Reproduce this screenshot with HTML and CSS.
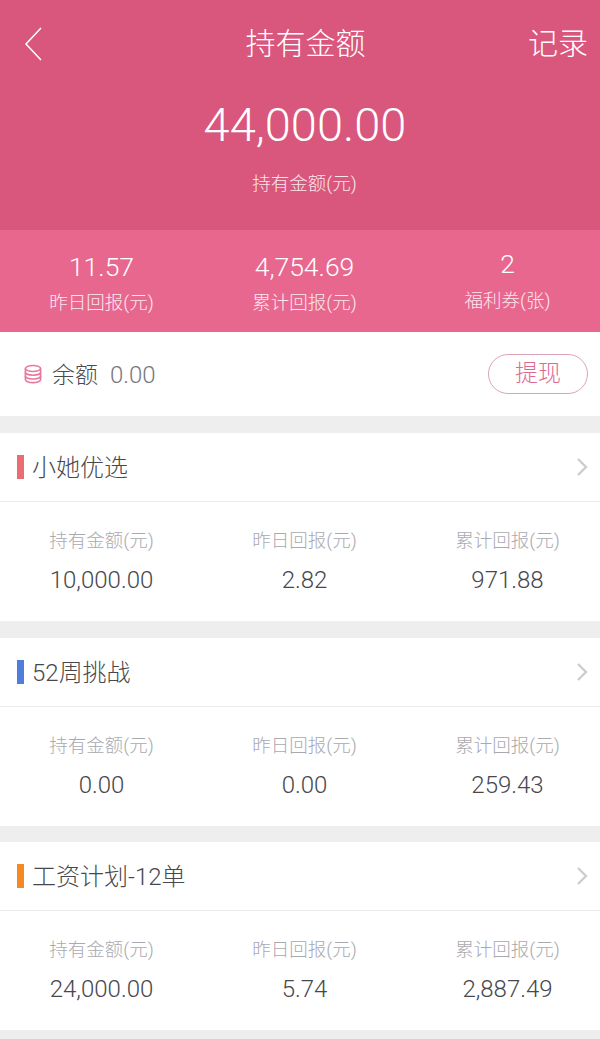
FILE: index.html
```html
<!DOCTYPE html>
<html lang="zh-CN">
<head>
    <meta charset="UTF-8">
    <meta name="viewport" content="width=device-width, initial-scale=1.0">
    <title>持有金额</title>
    <link rel="stylesheet" href="styles.css">
</head>
<body>
    <header class="hero">
        <div class="nav">
            <a class="nav-back" href="#">
                <svg width="20" height="36" viewBox="0 0 20 36" fill="none" stroke="#fff" stroke-width="1.5"><path d="M18 2 L3 18 L18 34"/></svg>
            </a>
            <h1 class="nav-title">持有金额</h1>
            <a class="nav-link" href="#">记录</a>
        </div>
        <div class="hero-amount">44,000.00</div>
        <div class="hero-label">持有金额(元)</div>
    </header>

    <section class="stats">
        <div class="stat">
            <div class="stat-num">11.57</div>
            <div class="stat-label">昨日回报(元)</div>
        </div>
        <div class="stat">
            <div class="stat-num">4,754.69</div>
            <div class="stat-label">累计回报(元)</div>
        </div>
        <div class="stat stat-up">
            <div class="stat-num">2</div>
            <div class="stat-label">福利券(张)</div>
        </div>
    </section>

    <section class="balance">
        <svg class="balance-icon" width="18" height="20" viewBox="0 0 18 20" fill="none" stroke="#e8789c" stroke-width="1.6">
            <ellipse cx="9" cy="4.5" rx="7.6" ry="3"/>
            <path d="M1.4 4.5 V15.5 C1.4 17.2 4.8 18.6 9 18.6 C13.2 18.6 16.6 17.2 16.6 15.5 V4.5"/>
            <path d="M1.4 8.2 C1.4 9.9 4.8 11.2 9 11.2 C13.2 11.2 16.6 9.9 16.6 8.2"/>
            <path d="M1.4 12 C1.4 13.7 4.8 15 9 15 C13.2 15 16.6 13.7 16.6 12"/>
        </svg>
        <span class="balance-name">余额</span>
        <span class="balance-num">0.00</span>
        <a class="withdraw" href="#">提现</a>
    </section>

    <section class="card">
        <div class="card-head">
            <i class="mark mark-red"></i>
            <span class="card-title">小她优选</span>
            <svg class="arrow" width="12" height="20" viewBox="0 0 12 20" fill="none" stroke="#cdcdd1" stroke-width="2.4"><path d="M2 2 L10 10 L2 18"/></svg>
        </div>
        <div class="card-body">
            <div class="cell"><div class="cell-label">持有金额(元)</div><div class="cell-num">10,000.00</div></div>
            <div class="cell"><div class="cell-label">昨日回报(元)</div><div class="cell-num">2.82</div></div>
            <div class="cell"><div class="cell-label">累计回报(元)</div><div class="cell-num">971.88</div></div>
        </div>
    </section>

    <section class="card">
        <div class="card-head">
            <i class="mark mark-blue"></i>
            <span class="card-title">52周挑战</span>
            <svg class="arrow" width="12" height="20" viewBox="0 0 12 20" fill="none" stroke="#cdcdd1" stroke-width="2.4"><path d="M2 2 L10 10 L2 18"/></svg>
        </div>
        <div class="card-body">
            <div class="cell"><div class="cell-label">持有金额(元)</div><div class="cell-num">0.00</div></div>
            <div class="cell"><div class="cell-label">昨日回报(元)</div><div class="cell-num">0.00</div></div>
            <div class="cell"><div class="cell-label">累计回报(元)</div><div class="cell-num">259.43</div></div>
        </div>
    </section>

    <section class="card">
        <div class="card-head">
            <i class="mark mark-orange"></i>
            <span class="card-title">工资计划-12单</span>
            <svg class="arrow" width="12" height="20" viewBox="0 0 12 20" fill="none" stroke="#cdcdd1" stroke-width="2.4"><path d="M2 2 L10 10 L2 18"/></svg>
        </div>
        <div class="card-body">
            <div class="cell"><div class="cell-label">持有金额(元)</div><div class="cell-num">24,000.00</div></div>
            <div class="cell"><div class="cell-label">昨日回报(元)</div><div class="cell-num">5.74</div></div>
            <div class="cell"><div class="cell-label">累计回报(元)</div><div class="cell-num">2,887.49</div></div>
        </div>
    </section>
</body>
</html>
```

FILE: styles.css
```css
* {
    box-sizing: border-box;
    margin: 0;
    padding: 0;
}

html, body {
    height: 1039px;
    overflow: hidden;
}

body {
    font-family: 'Roboto', 'Noto Sans CJK SC', sans-serif;
    font-weight: 300;
    background: #eeeeee;
    color: #444;
}

a {
    color: inherit;
    text-decoration: none;
}

.hero {
    height: 230px;
    background: #d9567c;
    color: #fff;
    text-align: center;
}

.nav {
    height: 87px;
    display: flex;
    align-items: center;
    justify-content: space-between;
    padding: 0 12px 0 23px;
}

.nav-back {
    width: 60px;
    display: flex;
}

.nav-title {
    font-size: 30px;
    font-weight: 300;
    line-height: 40px;
}

.nav-link {
    width: 60px;
    font-size: 30px;
    line-height: 40px;
    white-space: nowrap;
    text-align: right;
}

.hero-amount {
    width: 610px;
    font-size: 47px;
    line-height: 58px;
    margin-top: 9px;
}

.hero-label {
    width: 609px;
    font-size: 18.5px;
    line-height: 24px;
    margin-top: 18px;
    color: #fbe6ec;
}

.stats {
    height: 102px;
    background: #e8678f;
    color: #fff;
    display: grid;
    grid-template-columns: repeat(3, 203px);
    text-align: center;
    padding-top: 20px;
}

.stat-up {
    margin-top: -3px;
}

.stat-up .stat-label {
    margin-top: 8px;
}

.stat-num {
    font-size: 26.5px;
    line-height: 34px;
}

.stat-label {
    font-size: 18.5px;
    line-height: 24px;
    margin-top: 7px;
    color: #fde8ee;
}

.balance {
    height: 84px;
    background: #fff;
    display: flex;
    align-items: center;
    padding: 0 12px 0 24px;
}

.balance-name {
    font-size: 23px;
    margin-left: 10px;
    margin-bottom: 2px;
    color: #4a4a4f;
}

.balance-num {
    font-size: 24px;
    margin-left: 12px;
    margin-top: 1px;
    color: #77777c;
}

.withdraw {
    margin-left: auto;
    margin-bottom: 1px;
    width: 100px;
    height: 40px;
    border: 1px solid #dda3b8;
    border-radius: 20px;
    color: #df6a90;
    font-size: 23px;
    line-height: 38px;
    text-align: center;
}

.card {
    height: 188px;
    margin-top: 17px;
    background: #fff;
}

.card:last-child {
    margin-top: 16px;
}

.card-head {
    height: 69px;
    display: flex;
    align-items: center;
    padding: 0 12px 0 17px;
    border-bottom: 1px solid #ebebeb;
}

.mark {
    width: 7px;
    height: 24px;
    margin-right: 8px;
}

.mark-red {
    background: #ea6d72;
}

.mark-blue {
    background: #4f7ddb;
}

.mark-orange {
    background: #f58a25;
}

.card-title {
    font-size: 24px;
    margin-bottom: 4px;
    color: #47474c;
}

.arrow {
    margin-left: auto;
}

.card-body {
    display: grid;
    grid-template-columns: repeat(3, 203px);
    text-align: center;
    padding-top: 27px;
}

.cell-label {
    font-size: 18.5px;
    line-height: 24px;
    color: #a9a9b0;
}

.cell-num {
    font-size: 24px;
    line-height: 30px;
    margin-top: 12px;
    color: #47474c;
}
```
